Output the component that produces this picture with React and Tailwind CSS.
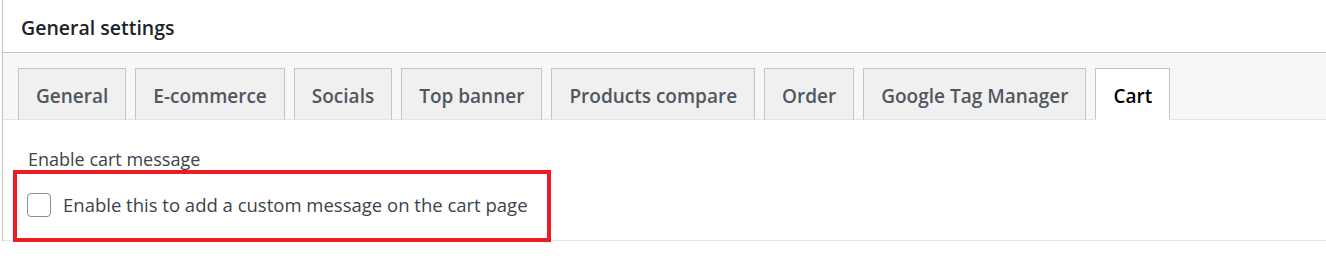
import React, { useState } from 'react';

const tabs = ['General', 'E-commerce', 'Socials', 'Top banner', 'Products compare', 'Order', 'Google Tag Manager', 'Cart'];

const App = () => {
    const [active, setActive] = useState('Cart');
    const [checked, setChecked] = useState(false);

    return (
        <div className="w-full h-[263px] bg-white font-['Open_Sans',sans-serif] overflow-hidden">
            <div className="ml-[2px] border-l border-[#c3c4c7]">
                {/* header */}
                <div className="h-[53px] pt-[14px] pl-[18px] border-b border-[#c3c4c7]">
                    <h2 className="text-[19.5px] leading-[28px] font-semibold text-[#1d2327]">General settings</h2>
                </div>

                {/* tabs */}
                <div className="bg-[#f6f7f7] pt-[15px] pl-[15px] border-b border-[#e2e4e7] flex gap-[9px]">
                    {tabs.map(t => (
                        <button
                            key={t}
                            onClick={() => setActive(t)}
                            className={
                                'h-[52px] -mb-px px-[17px] pt-[3px] border border-[#c3c4c7] text-[19px] font-semibold leading-[28px] ' +
                                (t === active
                                    ? 'bg-white text-black border-b-white'
                                    : 'bg-[#f0f0f1] text-[#50575e] border-b-[#e2e4e7]')
                            }
                        >
                            {t}
                        </button>
                    ))}
                </div>

                {/* content */}
                <div className="pt-[25px]">
                    <div className="pl-[25px] text-[18px] leading-[28px] text-[#3c434a]">Enable cart message</div>
                    <div className="relative h-[68px] border-b border-[#e5e5e5] pt-[18px] pl-[24px]">
                        <label className="flex items-start gap-[12px] cursor-pointer">
                            <span
                                onClick={() => setChecked(!checked)}
                                className="mt-[2px] w-[24px] h-[24px] rounded-[4px] border border-[#8c8f94] bg-white flex items-center justify-center"
                            >
                                {checked && (
                                    <svg viewBox="0 0 20 20" className="w-[20px] h-[20px]">
                                        <path d="M4 10.5l4 4 8-9" fill="none" stroke="#2271b1" strokeWidth="2.5" />
                                    </svg>
                                )}
                            </span>
                            <span className="text-[18.5px] leading-[28px] text-[#3c434a]">Enable this to add a custom message on the cart page</span>
                        </label>
                        {/* highlight frame */}
                        <div className="absolute left-[10px] top-[-3px] w-[538px] h-[72px] border-[4px] border-[#ed1c24] pointer-events-none" />
                    </div>
                </div>
            </div>
        </div>
    );
};

export default App;
